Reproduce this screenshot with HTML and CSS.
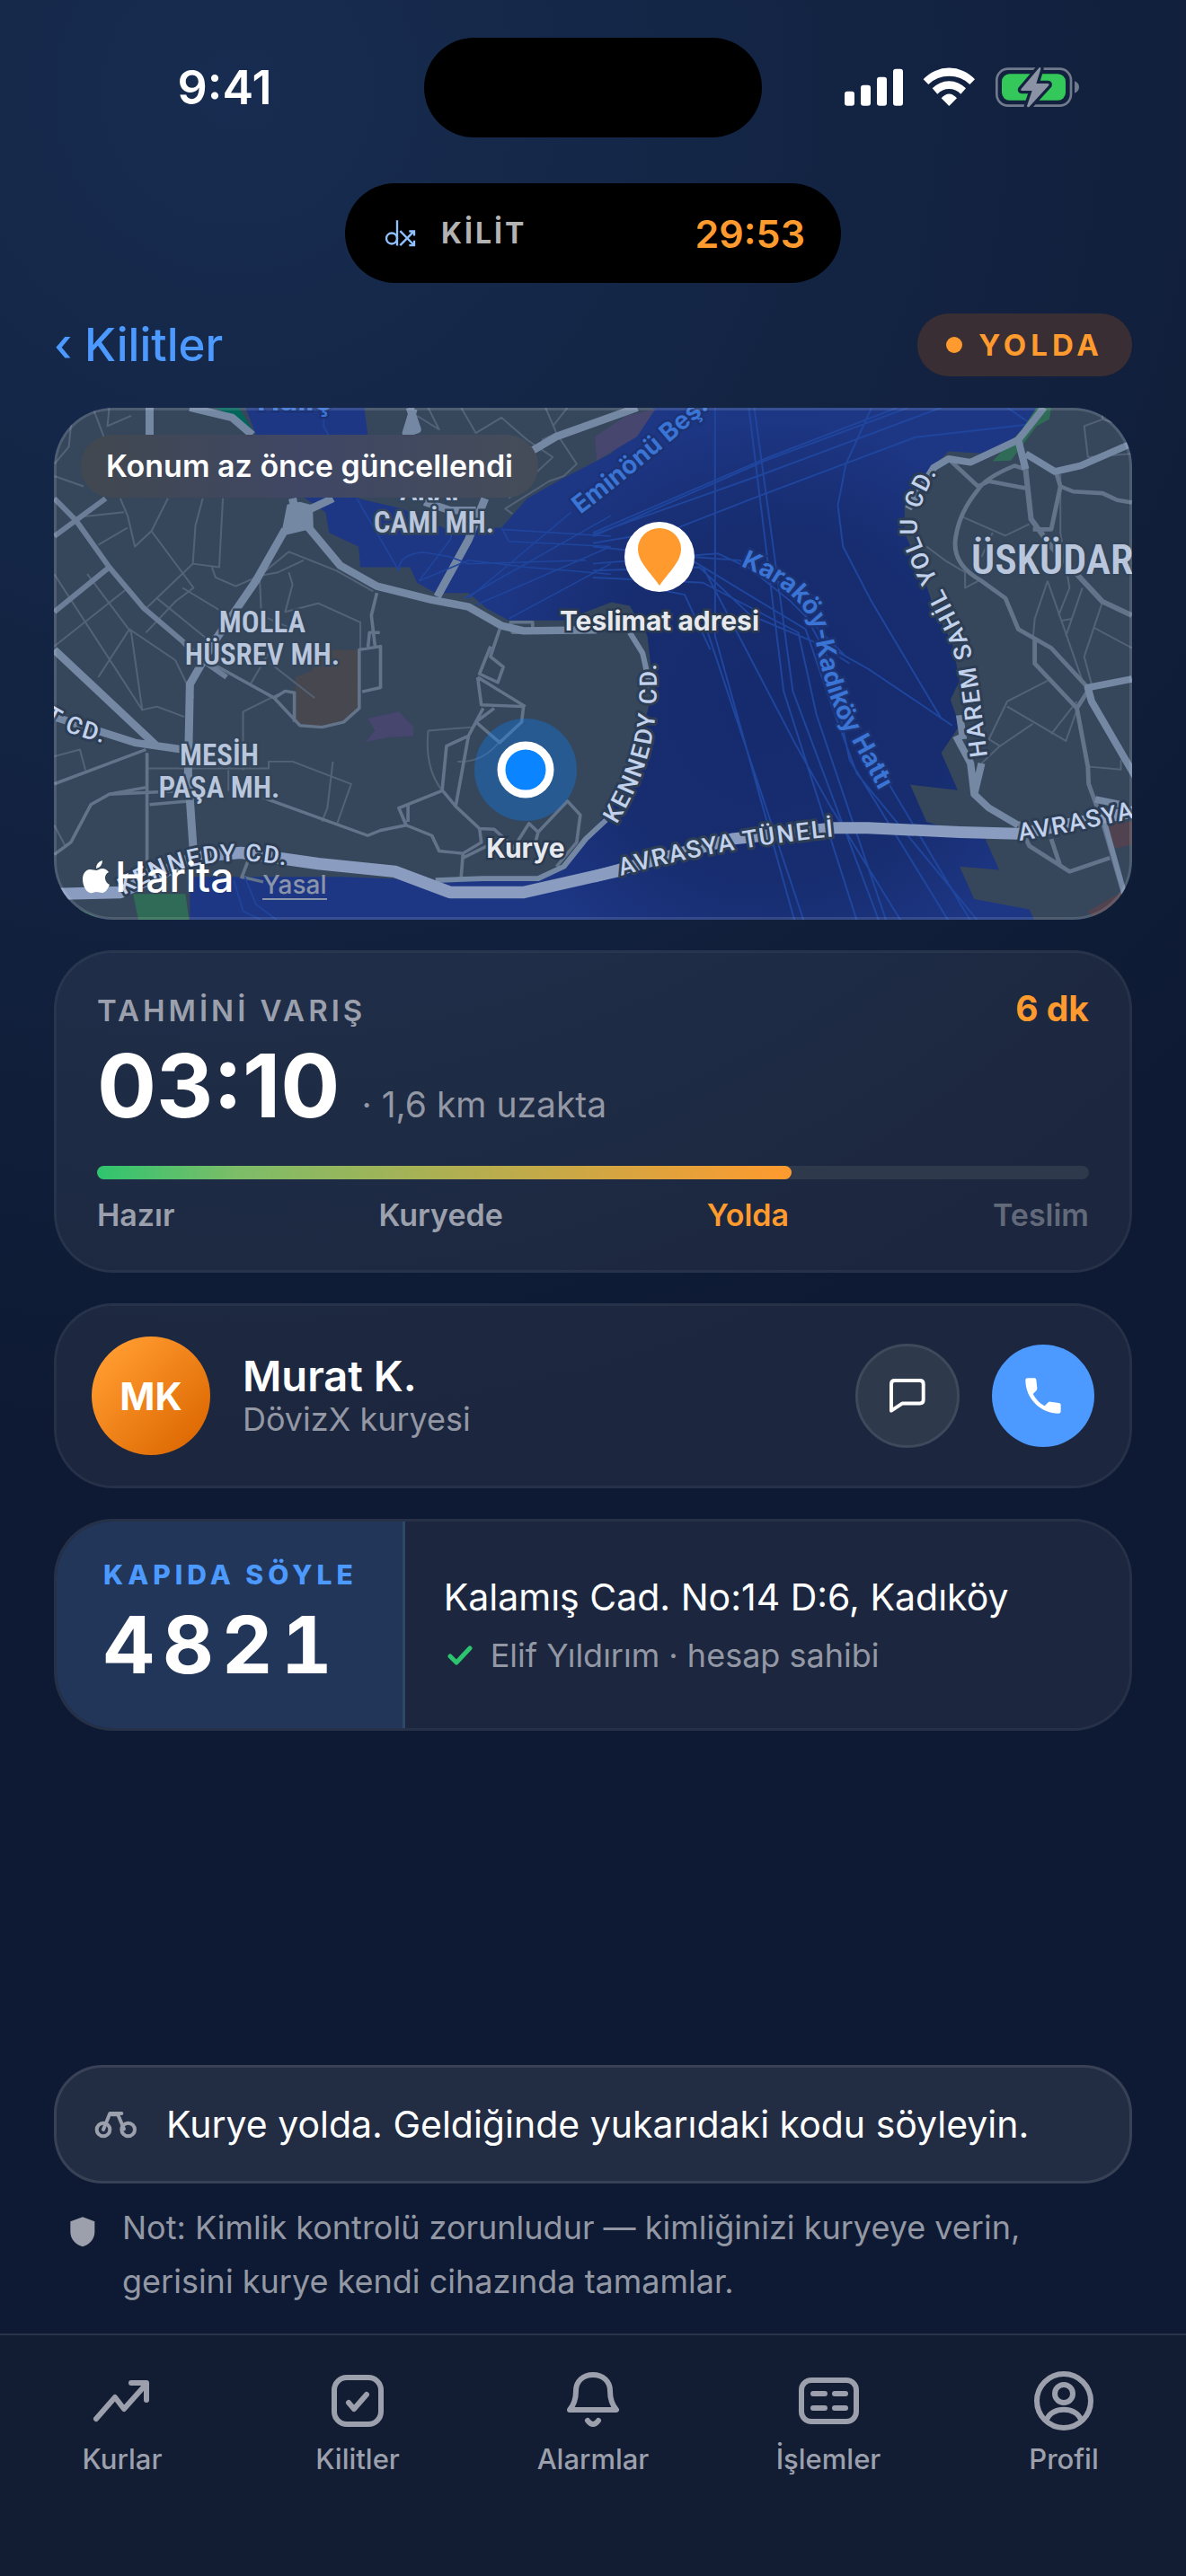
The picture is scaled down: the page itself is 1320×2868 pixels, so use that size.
FILE: index.html
```html
<!DOCTYPE html>
<html lang="tr">

<head>
  <meta charset="UTF-8">
  <meta name="viewport" content="width=device-width, initial-scale=1.0">
  <title>DövizX - Kurye Takibi</title>
  <link rel="stylesheet" href="styles.css">
</head>

<body>

  <div class="app">

    <!-- Status bar -->
    <div class="status-bar">
      <span class="clock">9:41</span>
      <div class="island"></div>
      <svg class="status-icons" viewBox="108 100 789 141" aria-hidden="true">
        <g fill="#fff">
          <rect x="111" y="183" width="33" height="48" rx="9" />
          <rect x="165" y="162" width="33" height="69" rx="9" />
          <rect x="219" y="135" width="33" height="96" rx="9" />
          <rect x="273" y="108" width="33" height="123" rx="9" />
          <path d="M374 143A116 116 0 0 1 546 143L529 160A99 99 0 0 0 391 160Z" />
          <path d="M404 173A77 77 0 0 1 516 173L499 192A53 53 0 0 0 421 192Z" />
          <path d="M434 206Q460 177 486 206L460 232Z" />
        </g>
        <rect x="619" y="108" width="248" height="123" rx="38" fill="none" stroke="#717a8d" stroke-width="8" />
        <rect x="636" y="125" width="213" height="88" rx="26" fill="#34c759" />
        <path d="M879 149Q894 155 894 169T879 189Z" fill="#717a8d" />
        <path d="M761 104L700 176Q698 181 703 181H737L720 232Q722 239 728 234L793 163Q795 157 790 157H751L766 108Q766 100 761 104Z" fill="#8a92a3" stroke="#132340" stroke-width="20" stroke-linejoin="round" paint-order="stroke" />
      </svg>
    </div>

    <!-- Live lock timer -->
    <div class="lock-pill">
      <svg class="logo" viewBox="144 133 105 92" fill="none" stroke="#8fc0ff" stroke-width="7" aria-hidden="true">
        <circle cx="168" cy="197" r="18" />
        <path d="M186 136V221M196 172L241 218M196 220L241 174M226 173H243V188M243 204V220H226" />
      </svg>
      <span class="lock-label">KİLİT</span>
      <span class="lock-time">29:53</span>
    </div>

    <header class="top-row">
      <a class="back" href="#">‹ Kilitler</a>
      <span class="badge"><i class="dot"></i>YOLDA</span>
    </header>

    <main class="content">

      <section class="map-card">
        <svg class="map" viewBox="0 0 1200 570" role="img" aria-label="Harita">
          <defs>
            <radialGradient id="deep" cx="800" cy="330" r="330" gradientUnits="userSpaceOnUse">
              <stop offset="0" stop-color="#152b6d" />
              <stop offset=".6" stop-color="#172d70" />
              <stop offset="1" stop-color="#1e3785" />
            </radialGradient>
            <path id="p-kennedy" d="M626 464Q664 402 669 345T665 250" />
            <path id="p-harem" d="M1039 388L1029 312Q1024 270 1008 239L988 200Q974 172 962 142Q954 112 996 52" />
            <path id="p-tunel" d="M631 521Q755 486 895 475" />
            <path id="p-tunel2" d="M1075 482Q1140 472 1230 450" />
            <path id="p-kennedy2" d="M78 543Q170 484 285 516" />
            <path id="p-cd" d="M-12 347Q14 365 75 378" />
            <path id="p-emin" d="M586 119Q665 58 745 -14" />
            <path id="p-kara" d="M764 176Q836 205 846 250Q860 330 885 365L945 475" />
          </defs>

          <rect width="1200" height="570" fill="url(#deep)" />

          <!-- Old city side -->
          <g transform="translate(-20 -14) scale(.408 .383)" stroke-linejoin="round" fill="none">
            <path fill="#36475c" d="M40 30H570L600 115L735 300L790 340L800 400L880 440L885 500L1020 500L1040 545L1090 575H1180L1230 620L1290 655H1440L1570 602L1620 612L1668 700L1684 850L1650 1000L1590 1170L1500 1290L1430 1375L1370 1412H1110L840 1400H420V1540H40Z" />
            <path fill="#36475c" d="M895 30H1690L1650 90L1568 170L1440 240L1340 300L1270 385L1120 390L1000 330L880 300L905 115Z" />
            <path fill="#00655a" d="M480 30H550L595 110L560 80Z" />
            <path fill="#2f6b56" d="M265 1450H408L418 1528H280ZM110 1490L190 1528H80Z" />
            <path fill="#47474f" d="M755 740H880V910L840 950L780 965H720L708 940V820L755 800Z" />
            <path fill="#47466f" d="M905 940L990 920L1030 965V990L960 995L900 1008L925 975ZM1525 120L1610 60L1690 40L1640 120L1530 190Z" />

            <!-- Side streets -->
            <g stroke="#536277" stroke-width="5">
              <path d="M100 36L90 150L50 200M155 36L185 120M200 36L195 90L260 60M50 235L130 265M230 300L250 350L270 440L315 395L360 300M455 300L435 380L428 490L500 500L510 300M315 395L430 560L380 600L300 690M250 385L170 435M110 355L240 340M428 490L300 620M480 500L490 530L545 555L610 525L660 515L730 480M50 520L290 915L260 690L140 520M50 730L245 565M170 820L255 680L380 770L430 880M290 915L330 905L405 935M330 590L480 720M400 560L540 650L470 760M610 525L690 455L820 510L920 570M690 515L700 550L680 630L770 605L885 660V740M610 525L615 640L700 680M585 840L640 740M640 780L760 880M565 1090V920L660 870M300 1085H635V1065H700L860 1130L820 1250M810 1065L795 1200L780 1240M50 1050L120 1030L135 1090M525 1090V1150M50 1250L80 1310M1070 975L1190 965M1070 975Q1060 1080 1105 1145M1150 1065Q1220 1070 1270 1000M1040 60L1100 100L1070 36M1160 36L1200 110L1270 65L1340 130L1410 180L1290 300M1390 36L1420 110L1475 200L1440 235L1400 250L1280 330L1300 345M1420 110L1380 130M1450 36L1410 90" />
            </g>
            <g stroke="#62738a" stroke-width="9">
              <path d="M480 780L650 880L720 960L780 965L840 950L882 910V740L940 730V850L890 862M650 880L680 860L705 865V950M930 575L915 640L925 730M905 740L910 690H938M620 1170L905 1280L940 1265L1010 1250M303 1040V1400M50 1130L300 1030M50 1335L95 1300L150 1190L200 1160L300 1140M200 1160L400 1150M310 1190L415 1180M1265 680L1240 760L1275 790L1260 835L1210 810L1240 730M1205 820L1215 900L1330 905L1325 950L1265 1010L1200 950L1250 910M1205 820L1335 905M1220 910L1180 990L1120 1020L1108 1150L990 1200L1010 1250L1080 1280L1100 1325L1165 1332L1215 1300L1210 1260L1145 1195L1180 990M1210 1260L1250 1262L1290 1300M1165 1332L1160 1400M1165 1345L1250 1300M1110 1150L1145 1195M1015 1190V1240M1300 1320L1345 1245L1370 1270L1360 1310M1370 1270L1450 1180L1485 1220L1475 1300L1420 1370M1295 660H1355V690H1300ZM560 1405L580 1350M560 1400L620 1415" />
            </g>
            <!-- Main roads -->
            <g stroke="#6b7d97" stroke-width="15">
              <path d="M50 300L110 365L200 500L295 620L400 715L440 760L520 820M50 630L200 500M50 410L190 300" />
            </g>
            <g stroke="#7488a4" stroke-width="22">
              <path d="M420 36L535 65L590 115M310 36V115M700 300L715 380M740 380L830 495L930 555L1080 595L1180 615L1270 670L1330 685L1530 682M750 330L810 300M680 390L600 540L490 710L420 840L415 1100L430 1330M50 740L330 1020M50 935L270 1010L400 1030M1225 300L1180 420L1095 585M1020 36L1040 100L1010 110L1030 40M1340 170L1420 120L1640 36M1060 310L1130 335L1200 335" />
              <path d="M1090 1410L1220 1405H1370L1440 1370L1500 1290L1555 1235M1620 690L1655 750L1676 850" stroke-width="15" />
            </g>
            <path fill="#7488a4" d="M685 318L720 310L755 320L757 390L735 393L668 410Z" />
            <path d="M50 1450L230 1445L440 1340L560 1330L770 1362L980 1385L1130 1445H1330L1600 1380" stroke="#8a9dc0" stroke-width="35" />

            <!-- Ferry lines -->
            <g stroke="#1f459d" stroke-width="4">
              <path d="M785 36V90L800 120M875 300L990 510Q990 460 1060 457L1130 470L1180 490L1500 480M1045 540L1130 420L1140 380M1045 540L1180 480L1340 500L1568 520M1170 590L1568 350M1200 610L1568 440M1290 650L1568 490M1270 385L1290 425L1568 440M1270 390L1568 410M1180 590L1460 340M540 1410L565 1500L620 1528M570 1400L600 1480L660 1528" />
            </g>
          </g>

          <!-- Strait and Üsküdar side -->
          <g transform="translate(600 -14) scale(.408 .383)" stroke-linejoin="round" fill="none">
            <g stroke="#1f459d" stroke-width="5">
              <path d="M333 36V700L550 1528M425 36L520 860L720 1528M440 36L545 860L780 1528M0 405L450 235L950 36M0 410L470 190L860 36M0 400L480 180L830 36M0 430L220 390L460 290L880 122L1190 85M760 36L690 200L668 320L682 440L760 600L950 940M0 440L270 470L400 480L540 600L690 760M0 510L290 500L430 640L610 720L700 780M0 530L300 545L560 690L610 930L800 1528M0 490L340 460L540 560L640 760L700 1060L970 1528M270 480L580 680L650 900L720 1100L1050 1528M300 500L550 1010L650 1200L840 1528M310 680L575 1528M640 730L750 795L980 960M740 1010L1030 1528M1130 36L1190 80M180 565L250 580L320 740" />
            </g>
            <path fill="#36475c" d="M1235 36L1190 70L1140 150L1070 170L970 163L920 215L850 320V400L900 520L930 620L980 720L1000 830L975 885L1000 960L950 1040L995 1148L865 1132L910 1240L1070 1290L1108 1380L1000 1370L1040 1465L1190 1495L1210 1540H1480V30Z" />
            <path fill="#2f6b56" d="M1210 36H1250L1245 70L1210 90L1140 190L1090 192L1170 100Z" />
            <path fill="#50434f" d="M1400 1240H1475V1305L1415 1320ZM1350 1500L1440 1445L1460 1510L1370 1528Z" />
            <g stroke="#536277" stroke-width="5">
              <path d="M1390 36V70L1470 95M1390 70L1340 90L1350 180L1470 170M1010 355L1125 408L1190 375M1090 400L1060 470M910 440L960 480L1015 515V560L1060 535M1275 230V400L1300 560L1270 640M1240 540L1205 650L1200 710M1240 540L1335 830M1335 560L1290 700M1390 600L1340 760L1360 840M1365 675L1470 735M1280 655L1305 650M1240 830L1130 890L1080 1000L1110 1020L1060 1070M1130 905L1290 1005L1325 900M1110 1020L1200 955M1250 985L1320 890M1355 1080L1440 1088V1060" />
            </g>
            <g stroke="#62738a" stroke-width="12">
              <path d="M975 190L1050 265L1080 250L1180 270M1180 215L1150 205Q1070 240 1050 275Q1000 340 990 410Q975 490 1060 540L1125 590L1160 680L1250 735L1350 850M1205 710V780L1320 910L1350 860M1265 230L1275 265L1250 390H1200M1275 265L1310 280L1390 285L1430 305L1470 312M1320 910L1350 1080L1352 1130L1390 1240L1450 1460M1160 1240L1190 1310L1300 1385L1410 1345M1250 1290L1275 1370" />
              <path d="M1180 215L1195 360L1250 440L1390 600L1470 640" stroke-width="15" />
            </g>
            <g stroke="#7488a4" stroke-width="20">
              <path d="M1230 36L1160 130L1030 195L970 185L930 210L860 330M1160 130L1180 215M1180 170L1260 222L1330 205L1470 140M1470 825L1350 850L1360 890L1480 1110M990 990L1030 1070L1040 1160L1080 1200L1160 1250M1000 930L1010 1000M1060 1070L1040 1160M1370 1175L1440 1190" />
              <path d="M1395 1240L1450 1450" stroke-width="14" />
            </g>
            <path d="M0 1400L380 1290L660 1258H750L1000 1270L1160 1275L1480 1210" stroke="#8a9dc0" stroke-width="34" />
          </g>

          <!-- Labels -->
          <g class="map-label" text-anchor="middle">
            <text x="423" y="103">ARAP</text>
            <text x="423" y="139">CAMİ MH.</text>
            <text x="232" y="250">MOLLA</text>
            <text x="232" y="286">HÜSREV MH.</text>
            <text x="184" y="398">MESİH</text>
            <text x="184" y="434">PAŞA MH.</text>
          </g>
          <text class="map-label map-label-big" x="1021" y="185">ÜSKÜDAR</text>
          <g class="road-label">
            <text><textPath href="#p-kennedy">KENNEDY CD.</textPath></text>
            <text><textPath href="#p-harem">HAREM SAHİL YOLU CD.</textPath></text>
            <text><textPath href="#p-tunel">AVRASYA TÜNELİ</textPath></text>
            <text><textPath href="#p-tunel2">AVRASYA</textPath></text>
            <text><textPath href="#p-kennedy2">KENNEDY CD.</textPath></text>
            <text><textPath href="#p-cd">T CD.</textPath></text>
          </g>
          <g class="sea-label">
            <text class="sea-label-big" x="226" y="3">Haliç</text>
            <text><textPath href="#p-emin">Eminönü Beş.</textPath></text>
            <text><textPath href="#p-kara">Karaköy-Kadıköy Hattı</textPath></text>
          </g>

          <!-- Delivery address pin -->
          <circle cx="674" cy="166" r="39" fill="#fff" />
          <path d="M674 198C664 183 650 172 650 157A24 23 0 0 1 698 157C698 172 684 183 674 198Z" fill="#ff9a2e" />
          <text class="pin-label" x="674" y="248" text-anchor="middle">Teslimat adresi</text>

          <!-- Courier -->
          <circle cx="525" cy="403" r="57" fill="#0a84ff" fill-opacity=".32" />
          <circle cx="525" cy="403" r="27" fill="#0a84ff" stroke="#fff" stroke-width="9" />
          <text class="pin-label" x="525" y="501" text-anchor="middle">Kurye</text>
        </svg>

        <span class="map-chip">Konum az önce güncellendi</span>
        <div class="map-credit">
          <span class="map-brand">
            <svg class="apple" viewBox="0 0 30 37" fill="#fff" aria-hidden="true">
              <path d="M15 11C17 11 19 9 22 9Q26 9 29 13C23 16 24 24 30 27C28 32 25 36 22 36C19 36 18 35 15 35S11 37 8 36C4 35 0 28 0 21C0 14 4 10 8 10C11 10 13 11 15 11ZM15 9Q15 2 22 0Q22 7 15 9Z" />
            </svg>Harita</span>
          <a class="map-legal" href="#">Yasal</a>
        </div>
      </section>

      <section class="card eta">
        <div class="eta-head">
          <span class="eta-title">TAHMİNİ VARIŞ</span>
          <span class="eta-min">6 dk</span>
        </div>
        <div class="eta-main">
          <span class="eta-time">03:10</span>
          <span class="eta-dist">· 1,6 km uzakta</span>
        </div>
        <div class="bar">
          <div class="bar-fill" style="width: 70%"></div>
        </div>
        <div class="steps">
          <span>Hazır</span>
          <span>Kuryede</span>
          <span class="active">Yolda</span>
          <span class="next">Teslim</span>
        </div>
      </section>

      <section class="card courier">
        <div class="avatar">MK</div>
        <div class="courier-info">
          <div class="courier-name">Murat K.</div>
          <div class="sub">DövizX kuryesi</div>
        </div>
        <button class="round-btn" type="button" aria-label="Mesaj gönder">
          <svg width="40" height="40" viewBox="152 172 122 120" fill="none" stroke="#fff" stroke-width="12" stroke-linejoin="round">
            <path d="M158 283V192Q158 180 170 180H255Q267 180 267 192V246Q267 258 255 258H195Z" />
          </svg>
        </button>
        <button class="round-btn call" type="button" aria-label="Ara">
          <svg width="40" height="40" viewBox="605 166 120 120" fill="#fff">
            <path d="M614 167H636Q642 167 642 173L645 200Q646 205 643 208L631 220Q646 248 670 260L682 248Q685 245 689 246L718 250Q724 251 724 256V278Q724 285 717 285C656 285 606 234 606 174Q606 167 614 167Z" />
          </svg>
        </button>
      </section>

      <section class="card door">
        <div class="door-code">
          <span class="door-label">KAPIDA SÖYLE</span>
          <span class="door-number">4821</span>
        </div>
        <div class="door-address">
          <div class="address">Kalamış Cad. No:14 D:6, Kadıköy</div>
          <div class="sub owner">
            <svg width="36" height="36" viewBox="0 0 36 36" fill="none" stroke="#2cc46e" stroke-width="5" stroke-linecap="round" stroke-linejoin="round" aria-hidden="true">
              <path d="M7 19L14 26L29 10" />
            </svg>
            Elif Yıldırım · hesap sahibi
          </div>
        </div>
      </section>

      <section class="card message">
        <svg width="48" height="32" viewBox="131 192 144 96" fill="none" stroke="#9ba0ac" stroke-width="12" stroke-linecap="round" stroke-linejoin="round" aria-hidden="true">
          <circle cx="161" cy="258" r="22" />
          <circle cx="244" cy="258" r="22" />
          <path d="M161 258L183 204H222M209 206L230 256M190 208H210" />
        </svg>
        Kurye yolda. Geldiğinde yukarıdaki kodu söyleyin.
      </section>

      <div class="note">
        <svg width="28" height="34" viewBox="53 533 84 102" fill="#9ba0ac" aria-hidden="true">
          <path d="M95 534L135 549V583C135 608 118 626 95 633C71 626 54 608 54 583V549Z" />
        </svg>
        <p>Not: Kimlik kontrolü zorunludur — kimliğinizi kuryeye verin, gerisini kurye kendi cihazında tamamlar.</p>
      </div>
    </main>

    <nav class="tab-bar">
      <a href="#">
        <svg viewBox="0 0 72 72"><path d="M7 57L28 33L38 46L63 18M46 17H63V36" /></svg>
        Kurlar
      </a>
      <a href="#">
        <svg viewBox="0 0 72 72"><rect x="10" y="11" width="52" height="52" rx="14" /><path d="M26 39L32 46L46 30" /></svg>
        Kilitler
      </a>
      <a href="#">
        <svg viewBox="0 0 72 72"><path d="M10 47C15 41 17 35 17 26C17 15 25 8 36 8S55 15 55 26C55 35 57 41 62 47ZM30 59Q36 67 42 59" /></svg>
        Alarmlar
      </a>
      <a href="#">
        <svg viewBox="0 0 72 72"><rect x="6" y="14" width="61" height="46" rx="11" /><path d="M19 29H32M43 29H55M19 45H32M43 45H55" /></svg>
        İşlemler
      </a>
      <a href="#">
        <svg viewBox="0 0 72 72"><circle cx="36" cy="37" r="30" /><circle cx="36" cy="29" r="10" /><path d="M17 58C22 43 50 43 55 58" /></svg>
        Profil
      </a>
    </nav>
  </div>

</body>

</html>
```
FILE: styles.css
```css
* {
  box-sizing: border-box;
}

body {
  margin: 0;
  font-family: Inter, Roboto, sans-serif;
  color: #fff;
  background: #0e1a33;
}

a {
  text-decoration: none;
}

svg {
  display: block;
  flex-shrink: 0;
}

.app {
  min-height: 100vh;
  display: flex;
  flex-direction: column;
  background: radial-gradient(circle 1500px at 20% 100px, #172c50, #0e1a33);
}

/* Status bar */
.status-bar {
  display: grid;
  grid-template-columns: 1fr 376px 1fr;
  align-items: center;
  justify-items: center;
  padding: 42px 28px 0;
}

.clock {
  font-size: 52px;
  font-weight: 600;
}

.island {
  width: 100%;
  height: 111px;
  border-radius: 56px;
  background: #000;
}

.status-icons {
  width: 263px;
  height: 47px;
}

.lock-pill {
  width: 552px;
  height: 111px;
  margin: 51px auto 0;
  padding: 0 40px 0 44px;
  display: flex;
  align-items: center;
  border-radius: 56px;
  background: #000;
}

.logo {
  width: 35px;
  height: 31px;
}

.lock-label {
  margin-left: 28px;
  font-size: 32px;
  font-weight: 700;
  letter-spacing: 3px;
  color: #b3b3b3;
}

.lock-time {
  margin-left: auto;
  font-size: 43px;
  font-weight: 600;
  color: #ff9a2e;
}

.top-row {
  display: flex;
  justify-content: space-between;
  align-items: center;
  padding: 34px 60px 0;
}

.back {
  font-size: 51px;
  line-height: 70px;
  font-weight: 500;
  color: #4c99ff;
}

.badge {
  height: 70px;
  padding: 0 32px;
  display: flex;
  align-items: center;
  gap: 18px;
  border-radius: 35px;
  font-size: 33px;
  font-weight: 700;
  letter-spacing: 5px;
  color: #ff9a2e;
  background: #3a2e35;
}

.dot {
  width: 18px;
  height: 18px;
  border-radius: 50%;
  background: #ff9a2e;
}

.content {
  flex: 1;
  display: flex;
  flex-direction: column;
  gap: 34px;
  padding: 35px 60px 28px;
}

.card {
  border: 3px solid rgba(255, 255, 255, 0.1);
  border-radius: 66px;
  background: rgba(255, 255, 255, 0.06);
  background-clip: padding-box;
}

.sub {
  font-size: 36px;
  line-height: 44px;
  color: #9398a4;
}

/* Map */
.map-card {
  position: relative;
  border-radius: 66px;
  overflow: hidden;
}

.map-card::after {
  content: "";
  position: absolute;
  inset: 0;
  border: 3px solid rgba(255, 255, 255, 0.12);
  border-radius: 66px;
  pointer-events: none;
}

.map {
  width: 100%;
  height: auto;
}

.map-label {
  font-family: "Roboto Condensed", "Liberation Sans Narrow", Roboto, sans-serif;
  font-size: 33px;
  font-weight: 600;
  fill: #b9c6dc;
  stroke: #33455b;
  stroke-width: 5px;
  paint-order: stroke;
}

.map-label-big {
  font-size: 46px;
}

.road-label {
  font-family: Roboto, sans-serif;
  font-size: 27px;
  font-weight: 500;
  letter-spacing: 2px;
  fill: #c3d2ec;
  stroke: #2c3d54;
  stroke-width: 6px;
  stroke-linejoin: round;
  paint-order: stroke;
}

.sea-label {
  font-size: 28px;
  font-weight: 700;
  fill: #3a74d4;
  stroke: #1b3274;
  stroke-width: 5px;
  paint-order: stroke;
}

.sea-label-big {
  font-size: 34px;
}

.pin-label {
  font-size: 30px;
  font-weight: 700;
  fill: #e6eaf0;
  stroke: #2b3a4e;
  stroke-width: 5px;
  paint-order: stroke;
}

.map-chip {
  position: absolute;
  top: 30px;
  left: 30px;
  padding: 0 28px;
  border-radius: 35px;
  font-size: 34px;
  line-height: 70px;
  font-weight: 600;
  background: linear-gradient(90deg, #41484f, #3f4765 50%, #454c58);
}

.map-credit {
  position: absolute;
  left: 32px;
  bottom: 22px;
  display: flex;
  align-items: baseline;
  gap: 32px;
}

.map-brand {
  display: flex;
  align-items: center;
  gap: 6px;
  font-size: 46px;
  line-height: 52px;
  font-weight: 500;
}

.apple {
  width: 30px;
  height: 37px;
}

.map-legal {
  font-size: 28px;
  line-height: 30px;
  font-weight: 500;
  color: #8b95a9;
  border-bottom: 2px solid #8b95a9;
}

/* Arrival */
.eta {
  padding: 38px 45px 41px;
}

.eta-head {
  display: flex;
  justify-content: space-between;
  align-items: baseline;
}

.eta-title {
  font-size: 33px;
  line-height: 48px;
  font-weight: 600;
  letter-spacing: 4px;
  color: #9ba0ac;
}

.eta-min {
  font-size: 39px;
  line-height: 48px;
  font-weight: 700;
  color: #ff9a2e;
}

.eta-main {
  display: flex;
  align-items: baseline;
  gap: 24px;
  margin-top: 12px;
}

.eta-time {
  font-size: 98px;
  line-height: 96px;
  font-weight: 700;
}

.eta-dist {
  font-size: 39px;
  color: #9398a4;
}

.bar {
  height: 15px;
  margin-top: 41px;
  border-radius: 8px;
  background: #2e394c;
}

.bar-fill {
  height: 100%;
  border-radius: 8px;
  background: linear-gradient(90deg, #2fc46f, #7cbd68 20%, #ff9a2e);
}

.steps {
  display: flex;
  justify-content: space-between;
  margin-top: 20px;
  font-size: 34px;
  line-height: 40px;
  font-weight: 600;
  color: #9ba0ac;
}

.steps .active {
  color: #ff9a2e;
}

.steps .next {
  color: #626a7a;
}

/* Courier */
.courier {
  display: flex;
  align-items: center;
  gap: 36px;
  padding: 34px 39px;
}

.avatar {
  width: 132px;
  height: 132px;
  display: flex;
  align-items: center;
  justify-content: center;
  border-radius: 50%;
  font-size: 42px;
  font-weight: 700;
  background: linear-gradient(135deg, #ff9a2e 15%, #df6b05 85%);
}

.courier-info {
  flex: 1;
}

.courier-name {
  font-size: 47px;
  line-height: 52px;
  font-weight: 600;
}

.round-btn {
  width: 116px;
  height: 116px;
  padding: 0;
  display: flex;
  align-items: center;
  justify-content: center;
  border: 3px solid #3f495b;
  border-radius: 50%;
  background: #2e394c;
}

.round-btn.call {
  width: 114px;
  height: 114px;
  border: none;
  background: #4c99ff;
}

/* Door code */
.door {
  display: flex;
  overflow: hidden;
}

.door-code {
  display: flex;
  flex-direction: column;
  gap: 12px;
  padding: 41px 50px 45px 52px;
  border-right: 3px solid #304868;
  background: #223659;
}

.door-label {
  font-size: 30px;
  line-height: 36px;
  font-weight: 800;
  letter-spacing: 5px;
  color: #4c99ff;
}

.door-number {
  font-size: 88px;
  line-height: 96px;
  font-weight: 700;
  font-variant-numeric: tabular-nums;
  letter-spacing: 9px;
}

.door-address {
  display: flex;
  flex-direction: column;
  justify-content: center;
  gap: 18px;
  padding: 0 43px;
}

.address {
  font-size: 41px;
  line-height: 50px;
}

.owner {
  display: flex;
  align-items: center;
  gap: 16px;
}

.message {
  min-height: 132px;
  margin-top: auto;
  padding: 20px 42px;
  display: flex;
  align-items: center;
  gap: 32px;
  border-radius: 54px;
  font-size: 41px;
  line-height: 50px;
  background: #222c43;
}

.note {
  display: flex;
  gap: 30px;
  margin-top: -15px;
  padding: 0 18px;
}

.note svg {
  margin-top: 18px;
}

.note p {
  max-width: 1060px;
  margin: 0;
  font-size: 36px;
  line-height: 60px;
  color: #9398a4;
}

/* Tabs */
.tab-bar {
  height: 270px;
  padding: 36px 5px 0;
  display: grid;
  grid-template-columns: repeat(5, 1fr);
  border-top: 2px solid #29344a;
  background: #121c33;
}

.tab-bar a {
  display: flex;
  flex-direction: column;
  align-items: center;
  gap: 10px;
  font-size: 31px;
  line-height: 40px;
  font-weight: 500;
  color: #9ba0ac;
}

.tab-bar svg {
  width: 72px;
  height: 72px;
  fill: none;
  stroke: #9ba0ac;
  stroke-width: 6;
  stroke-linecap: round;
  stroke-linejoin: round;
}
```
